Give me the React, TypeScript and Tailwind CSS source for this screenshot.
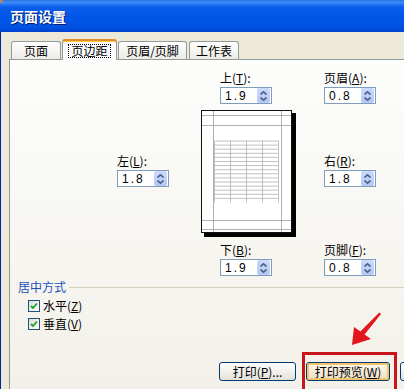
import React from "react";

function Spinner({ value }: { value: string }) {
  return (
    <div className="flex h-[17px] w-[52px] items-center border border-[#7F9DB9] bg-white">
      <span className="flex-1 pl-[4px] font-['Liberation_Sans'] text-[12px] leading-[14px] tracking-[2px] text-black">
        {value}
      </span>
      <div className="mr-px flex h-[15px] w-[13px] flex-col items-center justify-center gap-[2px] rounded-[2px] bg-gradient-to-b from-[#CBDAFC] to-[#B4C8F5]">
        <svg width="7" height="4" viewBox="0 0 7 4">
          <path d="M0.5 3.5 L3.5 0.8 L6.5 3.5" fill="none" stroke="#4D6185" strokeWidth="1.6" />
        </svg>
        <svg width="7" height="4" viewBox="0 0 7 4">
          <path d="M0.5 0.5 L3.5 3.2 L6.5 0.5" fill="none" stroke="#4D6185" strokeWidth="1.6" />
        </svg>
      </div>
    </div>
  );
}

function Field({ label, k, value }: { label: string; k: string; value: string }) {
  return (
    <div className="flex w-[52px] flex-col gap-[2px]">
      <div className="whitespace-nowrap text-[12px] leading-[14px] text-black">
        {label}(<span className="underline">{k}</span>):
      </div>
      <Spinner value={value} />
    </div>
  );
}

function Tab({ label, w, selected }: { label: string; w: string; selected?: boolean }) {
  if (selected) {
    return (
      <div
        className={`relative z-10 -mb-px flex h-[21px] ${w} items-center justify-center rounded-t-[3px] border-x border-t-2 border-x-[#919B9C] border-t-[#E68B2C] bg-[#FCFCFE] shadow-[inset_0_1px_0_#FFC73C]`}
      >
        <span className="border border-dotted border-black px-[2px] text-[12px] leading-[12px] text-black">
          {label}
        </span>
      </div>
    );
  }
  return (
    <div
      className={`flex h-[18px] ${w} items-center justify-center rounded-t-[3px] border-x border-t border-[#919B9C] bg-gradient-to-b from-white to-[#ECEBE5] text-[12px] leading-[14px] text-black`}
    >
      {label}
    </div>
  );
}

function Check({ label, k }: { label: string; k: string }) {
  return (
    <div className="flex items-center gap-[3px] text-[12px] leading-[14px] text-black">
      <div className="flex h-[12px] w-[12px] items-center justify-center border border-[#1C5180] bg-gradient-to-br from-[#DCDCD7] to-white">
        <svg width="8" height="8" viewBox="0 0 8 8">
          <path d="M1 4 L3 6 L7 1.5" fill="none" stroke="#21A121" strokeWidth="1.8" />
        </svg>
      </div>
      <span>
        {label}(<span className="underline">{k}</span>)
      </span>
    </div>
  );
}

function Preview() {
  const rows: number[] = [];
  for (let y = 31; y <= 92; y += 4.1) rows.push(y);
  return (
    <svg width="95" height="127" viewBox="0 0 95 127">
      <rect x="3" y="3" width="92" height="124" fill="#000" />
      <rect x="0.5" y="0.5" width="90" height="122" fill="#fff" stroke="#111" strokeWidth="1" />
      <g stroke="#9C9C9C" strokeWidth="0.8">
        <line x1="12.5" y1="1" x2="12.5" y2="122" />
        <line x1="80.5" y1="1" x2="80.5" y2="122" />
        <line x1="1" y1="5.5" x2="90" y2="5.5" />
        <line x1="1" y1="15.5" x2="90" y2="15.5" />
        <line x1="1" y1="110.5" x2="90" y2="110.5" />
        <line x1="1" y1="119.5" x2="90" y2="119.5" />
      </g>
      <g stroke="#A8A8A8" strokeWidth="0.7">
        {rows.map((y, i) => (
          <line key={i} x1="13.5" y1={y} x2="77.5" y2={y} />
        ))}
        {[13.5, 29.5, 45.5, 61.5, 77.5].map((x, i) => (
          <line key={i} x1={x} y1="31" x2={x} y2="92.5" />
        ))}
      </g>
    </svg>
  );
}

export default function App() {
  return (
    <div className="relative h-[389px] w-[404px] overflow-hidden bg-[#ECE9D8] font-['Noto_Sans_CJK_SC',sans-serif]">
      {/* title bar */}
      <div className="flex h-[32px] items-center bg-[linear-gradient(to_bottom,#2A6FE0_0%,#3D8EFA_7%,#0A5CEC_22%,#0055E6_55%,#0052E2_85%,#0042CF_100%)] pl-[10px]">
        <span className="text-[14px] font-bold leading-[16px] text-white [text-shadow:1px_1px_0_#0A1E6E]">
          页面设置
        </span>
      </div>
      <div className="absolute left-0 top-0 h-[3px] w-[3px] bg-[#9C8A6A]" />

      <div className="flex h-[357px]">
        {/* left window frame */}
        <div className="w-[3px] border-l border-[#0026A8] bg-[#1258DE]" />
        <div className="flex-1 pl-[8px] pt-[7px]">
          {/* tabs */}
          <div className="flex h-[20px] items-end pl-[2px]">
            <Tab label="页面" w="w-[50px]" />
            <div className="w-[1px]" />
            <Tab label="页边距" w="w-[55px]" selected />
            <div className="w-[1px]" />
            <Tab label="页眉/页脚" w="w-[69px]" />
            <div className="w-[2px]" />
            <Tab label="工作表" w="w-[50px]" />
          </div>
          {/* panel */}
          <div className="h-[340px] w-[500px] border-l border-t border-[#919B9C] bg-gradient-to-b from-[#FDFDFC] to-[#F2F0E8]">
            <div className="flex">
              {/* col A */}
              <div className="flex w-[191px] flex-col items-end pr-[32px] pt-[94px]">
                <Field label="左" k="L" value="1.8" />
              </div>
              {/* col B */}
              <div className="flex w-[95px] flex-col pt-[11px]">
                <div className="pl-[19px]">
                  <Field label="上" k="T" value="1.9" />
                </div>
                <div className="mt-[6px]">
                  <Preview />
                </div>
                <div className="mt-[6px] pl-[19px]">
                  <Field label="下" k="B" value="1.9" />
                </div>
              </div>
              {/* col C */}
              <div className="ml-[28px] flex flex-col pt-[11px]">
                <Field label="页眉" k="A" value="0.8" />
                <div className="mt-[50px]">
                  <Field label="右" k="R" value="1.8" />
                </div>
                <div className="mt-[56px]">
                  <Field label="页脚" k="F" value="0.8" />
                </div>
              </div>
            </div>

            {/* group */}
            <div className="mt-[4px] flex items-center pl-[8px]">
              <span className="text-[12px] leading-[14px] text-[#2150B8]">居中方式</span>
              <div className="ml-[3px] h-px flex-1 bg-[#D0D0BF]" />
            </div>
            <div className="mt-[5px] flex flex-col gap-[4px] pl-[18px]">
              <Check label="水平" k="Z" />
              <Check label="垂直" k="V" />
            </div>

            {/* buttons */}
            <div className="mt-[31px] flex gap-[10px] pl-[209px]">
              <div className="flex h-[19px] w-[77px] items-center justify-center rounded-[3px] border border-[#003C74] bg-gradient-to-b from-white to-[#E3E1D8] text-[12px] leading-[14px] text-black">
                打印(<span className="underline">P</span>)...
              </div>
              <div className="flex h-[19px] w-[84px] items-center justify-center rounded-[3px] border border-[#003C74] bg-gradient-to-b from-[#FFF9EC] to-[#E9DFC6] text-[12px] leading-[14px] text-black shadow-[inset_0_0_0_2px_#F3C46A]">
                打印预览(<span className="underline">W</span>)
              </div>
              <div className="h-[19px] w-[77px] rounded-[3px] border border-[#003C74] bg-gradient-to-b from-white to-[#E3E1D8]" />
            </div>
          </div>
        </div>
      </div>

      {/* red highlight rectangle */}
      <div className="absolute left-[302px] top-[352px] h-[42px] w-[95px] border-[3px] border-[#C9141C]" />
      {/* red arrow */}
      <svg className="absolute left-[340px] top-[300px]" width="50" height="55" viewBox="0 0 50 55">
        <polygon
          points="12,45 14,27 20.4,31.5 39.3,12.5 41,14 24.5,34.5 31,39"
          fill="#E3151D"
        />
      </svg>
    </div>
  );
}
